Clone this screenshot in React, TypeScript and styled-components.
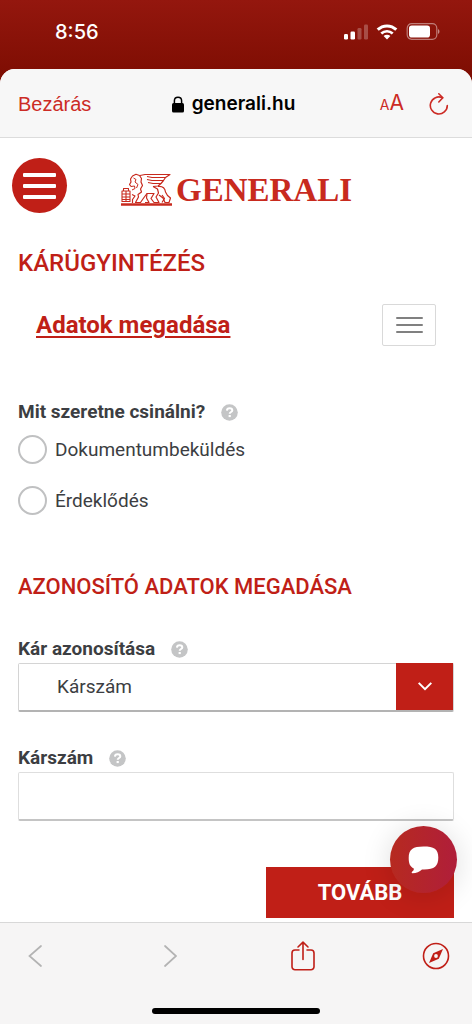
import React, { useState } from "react";
import styled, { createGlobalStyle } from "styled-components";

const red = "#c01f17";
const ink = "#3c3e42";

const GlobalStyle = createGlobalStyle`
  *, *::before, *::after { box-sizing: border-box; }
  body { margin: 0; background: #7d0d02; font-family: Roboto, sans-serif; color: ${ink}; }
  button, input, select { font: inherit; color: inherit; }
  button { padding: 0; border: 0; background: none; cursor: pointer; }
  svg { display: block; }
`;

const Screen = styled.div`
  min-height: 100vh;
  display: flex;
  flex-direction: column;
  background: linear-gradient(#94170e, #7d0d02 80px);
`;

const StatusBar = styled.div`
  display: flex;
  align-items: center;
  justify-content: space-between;
  height: 69px;
  padding: 0 32px 6px 55px;
  color: #fff;
`;

const Clock = styled.time`
  font: 500 20px/24px Inter, sans-serif;
`;

const StatusIcons = styled.div`
  display: flex;
  align-items: center;
  gap: 8px;
`;

const Sheet = styled.div`
  flex: 1;
  display: flex;
  flex-direction: column;
  overflow: hidden;
  border-radius: 15px 15px 0 0;
  background: #fff;
`;

const BrowserBar = styled.header`
  display: grid;
  grid-template-columns: 1fr auto 1fr;
  align-items: center;
  height: 69px;
  padding: 2px 23px 0 18px;
  border-bottom: 1px solid #dcdcdc;
  background: #f7f7f7;
  font-family: Inter, sans-serif;
`;

const CloseButton = styled.button`
  justify-self: start;
  color: #cc2b25;
  font: 400 20px/24px "Liberation Sans", Arial, sans-serif;
`;

const Address = styled.div`
  display: flex;
  align-items: center;
  gap: 8px;
  color: #000;
  font: 600 19px/24px Inter, sans-serif;
`;

const BrowserActions = styled.div`
  display: flex;
  align-items: center;
  justify-self: end;
  gap: 25px;
  color: #cc2b25;
`;

const TextSizeButton = styled.button`
  color: inherit;
  font: 400 21px/24px Inter, sans-serif;
`;

const SmallLetter = styled.span`
  font-size: 14px;
`;

const IconButton = styled.button`
  color: inherit;
`;

const Page = styled.main`
  position: relative;
  flex: 1;
  padding-bottom: 3px;
`;

const SiteHeader = styled.div`
  display: grid;
  grid-template-columns: 1fr auto 1fr;
  align-items: center;
  padding: 20px 12px 0;
`;

const RoundMenu = styled.button`
  display: grid;
  place-items: center;
  width: 55px;
  height: 55px;
  border-radius: 50%;
  background: ${red};
`;

const Logo = styled.a`
  display: flex;
  align-items: center;
  gap: 4px;
  padding-top: 8px;
  color: #c82a1e;
  text-decoration: none;
  font: 700 33px/34px "Liberation Serif", "Times New Roman", serif;
`;

const Form = styled.form`
  padding: 0 18px;
`;

const Title = styled.h1`
  margin: 34px 0 0;
  color: ${red};
  font-size: 24px;
  font-weight: 500;
  line-height: 32px;
`;

const StepRow = styled.nav`
  display: flex;
  align-items: center;
  justify-content: space-between;
  margin: 25px 0 0;
  padding: 0 18px;
`;

const StepLink = styled.a`
  color: ${red};
  font-size: 24px;
  font-weight: 700;
  line-height: 32px;
  text-underline-offset: 3px;
  text-decoration-thickness: 2px;
`;

const SquareMenu = styled.button`
  display: grid;
  place-items: center;
  width: 54px;
  height: 42px;
  border: 1px solid #d9d9d9;
  border-radius: 2px;
`;

const Choices = styled.fieldset`
  margin: 54px 0 0;
  padding: 0;
  border: 0;
`;

const Caption = styled.div`
  display: flex;
  align-items: center;
  gap: 16px;
  height: 24px;
  font-size: 19px;
  font-weight: 700;
  line-height: 24px;
`;

const ChoiceList = styled.div`
  padding-top: 11px;
`;

const Choice = styled.label`
  display: flex;
  align-items: center;
  gap: 8px;
  margin-bottom: 22px;
  font-size: 19px;
  line-height: 29px;
`;

const Radio = styled.input`
  appearance: none;
  width: 29px;
  height: 29px;
  margin: 0;
  border: 2px solid #c0c1c2;
  border-radius: 50%;
  &:checked { background: radial-gradient(${red} 7px, #fff 8px); }
`;

const SectionTitle = styled.h2`
  margin: 34px 0 0;
  color: ${red};
  font-size: 22px;
  font-weight: 500;
  line-height: 32px;
`;

const Field = styled.div`
  margin-top: 34px;
`;

const SelectBox = styled.div`
  display: flex;
  height: 49px;
  margin-top: 2px;
  border: 1px solid #d4d4d4;
  border-bottom: 2px solid #b3b3b3;
  border-radius: 2px;
`;

const Select = styled.select`
  flex: 1;
  min-width: 0;
  padding: 0 0 1px 38px;
  border: 0;
  appearance: none;
  background: #fff;
  font-size: 19px;
`;

const SelectArrow = styled.span`
  display: grid;
  place-items: center;
  width: 57px;
  margin-top: -1px;
  background: ${red};
  pointer-events: none;
`;

const TextInput = styled.input`
  display: block;
  width: 100%;
  height: 49px;
  margin-top: 2px;
  padding: 0 16px;
  border: 1px solid #dedede;
  border-bottom: 2px solid #c4c4c4;
  border-radius: 2px;
  font-size: 19px;
`;

const Actions = styled.div`
  display: flex;
  justify-content: flex-end;
  margin-top: 46px;
`;

const NextButton = styled.button`
  width: 188px;
  height: 51px;
  background: ${red};
  color: #fff;
  font-size: 22px;
  font-weight: 700;
`;

const ChatButton = styled.button`
  position: absolute;
  right: 15px;
  bottom: 29px;
  display: grid;
  place-items: center;
  width: 67px;
  height: 67px;
  border-radius: 50%;
  background: linear-gradient(90deg, #b62a20, #b01e3a);
  box-shadow: 0 3px 30px rgba(0, 0, 0, 0.14);
`;

const Toolbar = styled.footer`
  display: flex;
  flex-direction: column;
  justify-content: space-between;
  align-items: center;
  height: 102px;
  padding: 17px 22px 10px;
  border-top: 1px solid #d8d8d8;
  background: #f6f5f5;
`;

const ToolbarRow = styled.div`
  display: flex;
  align-items: center;
  justify-content: space-between;
  width: 100%;
  height: 32px;
  color: ${red};
`;

const ToolbarButton = styled.button`
  display: grid;
  place-items: center;
  width: 28px;
  height: 32px;
  color: inherit;
`;

const HomeIndicator = styled.div`
  width: 168px;
  height: 6px;
  border-radius: 3px;
  background: #000;
`;

const Help = () => (
  <svg width="17" height="17" viewBox="0 0 17 17" role="img" aria-label="Súgó">
    <circle cx="8.500" cy="8.500" r="8.300" fill="#c4c5c6" />
    <path d="M5.900 6.600C6 4.900 7 4.200 8.600 4.200C10.200 4.200 11.300 5 11.300 6.400C11.300 8 8.700 8 8.700 9.800" fill="none" stroke="#fff" strokeWidth="2" />
    <rect x="7.600" y="11" width="2.200" height="2.100" fill="#fff" />
  </svg>
);

const Lion = () => (
  <svg width="52" height="34" viewBox="0 0 52 34" fill="none" stroke="currentColor" strokeWidth="1.200" strokeLinejoin="round" aria-hidden="true">
    <path d="M1 31.500H52" strokeWidth="2.600" />
    <path d="M2 18H10V28.500H2ZM2 21H10M2 24H10M2 26.500H10M6 18V28.500M3.500 18V15.500H8.500V18" strokeWidth="1.100" />
    <path d="M11 13.500L9.500 11.500L11 9L10.500 6L12.500 3L16 1.300L19.500 2.500L21.500 5.500L21 9L22.500 12.500L20.500 16L21.500 19L18 21.500L18.500 24L15.500 29.500H20.500L24 24.500L27 20.500" />
    <path d="M11 13.500L14.500 13L15 15.500L12 17M13.500 5L16 6.500L15 9L18 11.500L16.500 15" strokeWidth="1" />
    <path d="M20 2.500L25 1.500H50L45.500 4.500H32L27 3.500M45.500 4.500L43.500 7.500H32L27 6.500M43.500 7.500L41 10.500H33L28 9.500M41 10.500L38 13L33 13.500" />
    <path d="M33 13.500L37.500 16L38.500 20L36 24L39 29.500H34L31 25.500L34 20.500H27L26.500 25L29 29.500H25M38 13.500C42.500 13 45 15.500 45.500 19L47.500 22.500L50.500 25L49 29.500H45L43 25L39 22" />
    <path d="M12 21.500L15 23L12.500 26.500V30M42 22L44.500 25.500L42 29.500" />
  </svg>
);

type LinesProps = { width: number; height: number; gap: number; thickness: number; color: string };

const Lines = ({ width, height, gap, thickness, color }: LinesProps) => (
  <svg width={width} height={height} viewBox={`0 0 ${width} ${height}`} fill={color} aria-hidden="true">
    {[0, 1, 2].map((i) => (
      <rect key={i} y={i * gap} width={width} height={thickness} rx="1" />
    ))}
  </svg>
);

export default function App() {
  const [kind, setKind] = useState("");
  const [claimNumber, setClaimNumber] = useState("");

  return (
    <Screen>
      <GlobalStyle />
      <StatusBar>
        <Clock>8:56</Clock>
        <StatusIcons>
          <svg width="24" height="16" viewBox="0 0 24 16" fill="#fff" aria-hidden="true">
            <rect y="10" width="4" height="5.500" rx="1.200" />
            <rect x="6.500" y="7.500" width="4.500" height="8" rx="1.200" />
            <rect x="13.500" y="4" width="4" height="11.500" rx="1.200" opacity="0.250" />
            <rect x="20" y="0.500" width="4" height="15" rx="1.200" opacity="0.250" />
          </svg>
          <svg width="22" height="16" viewBox="0 0 22 16" fill="none" stroke="#fff" strokeWidth="3" aria-hidden="true">
            <path d="M1.700 5.700C7 0.600 15 0.600 20.300 5.700" />
            <path d="M5.300 9.500C8.500 6.500 13.500 6.500 16.700 9.500" strokeWidth="2.700" />
            <path d="M11 15.500L7.600 12.100C9.500 10.400 12.500 10.400 14.400 12.100Z" fill="#fff" stroke="none" />
          </svg>
          <svg width="34" height="17" viewBox="0 0 34 17" fill="none" aria-hidden="true">
            <rect x="1.200" y="0.700" width="29.600" height="15.600" rx="4.500" stroke="#fff" strokeOpacity="0.450" strokeWidth="1.200" />
            <rect x="3" y="2.500" width="21" height="12" rx="2.800" fill="#fff" />
            <path d="M32 6V11C34 10 34 7 32 6Z" fill="#fff" fillOpacity="0.500" />
          </svg>
        </StatusIcons>
      </StatusBar>

      <Sheet>
        <BrowserBar>
          <CloseButton type="button">Bezárás</CloseButton>
          <Address>
            <svg width="12" height="17" viewBox="0 0 12 17" aria-hidden="true">
              <rect y="7" width="12" height="9.500" rx="1.600" />
              <path d="M2.400 8V4.700C2.400 0 9.600 0 9.600 4.700V8" fill="none" stroke="#000" strokeWidth="1.500" />
            </svg>
            generali.hu
          </Address>
          <BrowserActions>
            <TextSizeButton type="button" aria-label="Szövegméret">
              <SmallLetter>A</SmallLetter>A
            </TextSizeButton>
            <IconButton type="button" aria-label="Frissítés">
              <svg width="20" height="24" viewBox="0 0 20 24" fill="none" stroke="currentColor" strokeWidth="1.600" strokeLinecap="round" strokeLinejoin="round">
                <path d="M18.300 13.500A8.500 8.500 0 1 1 13.500 5.800" />
                <path d="M9.800 1.800L13.800 5.800L9.800 10" />
              </svg>
            </IconButton>
          </BrowserActions>
        </BrowserBar>

        <Page>
          <SiteHeader>
            <RoundMenu type="button" aria-label="Menü">
              <Lines width={33} height={26} gap={11} thickness={4} color="#fff" />
            </RoundMenu>
            <Logo href="#">
              <Lion />
              GENERALI
            </Logo>
          </SiteHeader>

          <Form onSubmit={(e) => e.preventDefault()}>
            <Title>KÁRÜGYINTÉZÉS</Title>
            <StepRow>
              <StepLink href="#">Adatok megadása</StepLink>
              <SquareMenu type="button" aria-label="Lépések">
                <Lines width={27} height={17} gap={7} thickness={2} color="#808080" />
              </SquareMenu>
            </StepRow>

            <Choices aria-labelledby="task">
              <Caption>
                <span id="task">Mit szeretne csinálni?</span>
                <Help />
              </Caption>
              <ChoiceList>
                {["Dokumentumbeküldés", "Érdeklődés"].map((name) => (
                  <Choice key={name}>
                    <Radio type="radio" name="task" value={name} checked={kind === name} onChange={() => setKind(name)} />
                    {name}
                  </Choice>
                ))}
              </ChoiceList>
            </Choices>

            <SectionTitle>AZONOSÍTÓ ADATOK MEGADÁSA</SectionTitle>

            <Field>
              <Caption>
                <label htmlFor="identify">Kár azonosítása</label>
                <Help />
              </Caption>
              <SelectBox>
                <Select id="identify" defaultValue="number">
                  <option value="number">Kárszám</option>
                </Select>
                <SelectArrow>
                  <svg width="14" height="9" viewBox="0 0 14 9" fill="none" stroke="#fff" strokeWidth="2" aria-hidden="true">
                    <path d="M0.700 0.900L7 7.200L13.300 0.900" />
                  </svg>
                </SelectArrow>
              </SelectBox>
            </Field>

            <Field>
              <Caption>
                <label htmlFor="number">Kárszám</label>
                <Help />
              </Caption>
              <TextInput id="number" type="text" value={claimNumber} onChange={(e) => setClaimNumber(e.target.value)} />
            </Field>

            <Actions>
              <NextButton type="submit">TOVÁBB</NextButton>
            </Actions>
          </Form>

          <ChatButton type="button" aria-label="Csevegés">
            <svg width="31" height="28" viewBox="0 0 31 28" fill="#fff">
              <path d="M15.500 0.500C26 0.500 30.300 3 30.300 11.500C30.300 20.500 26 24 14 23.500C11.500 25.800 8.500 27 4.500 27.300C3.300 27.200 3.500 26.300 4.500 25.300C5.600 24.300 6 23.500 5.800 22.400C2 20.800 0.700 17.500 0.700 12C0.700 3 5 0.500 15.500 0.500Z" />
            </svg>
          </ChatButton>
        </Page>

        <Toolbar>
          <ToolbarRow>
            <ToolbarButton type="button" aria-label="Vissza">
              <svg width="16" height="24" viewBox="0 0 16 24" fill="none" stroke="#b3b3b3" strokeWidth="1.700" strokeLinecap="round">
                <path d="M13 2L1.500 12L13 22" />
              </svg>
            </ToolbarButton>
            <ToolbarButton type="button" aria-label="Előre">
              <svg width="16" height="24" viewBox="0 0 16 24" fill="none" stroke="#b3b3b3" strokeWidth="1.700" strokeLinecap="round">
                <path d="M4 2L15 12L4 22" />
              </svg>
            </ToolbarButton>
            <ToolbarButton type="button" aria-label="Megosztás">
              <svg width="24" height="30" viewBox="0 0 24 30" fill="none" stroke="currentColor" strokeWidth="1.600" strokeLinecap="round" strokeLinejoin="round">
                <path d="M8 9H4A3 3 0 0 0 1 12V25.800A3 3 0 0 0 4 28.800H20A3 3 0 0 0 23 25.800V12A3 3 0 0 0 20 9H16" />
                <path d="M12 18.500V1.200M7 6L12 1.200L17 6" />
              </svg>
            </ToolbarButton>
            <ToolbarButton type="button" aria-label="Megnyitás böngészőben">
              <svg width="28" height="28" viewBox="0 0 28 28" fill="none" stroke="currentColor" strokeWidth="1.600">
                <circle cx="14" cy="14" r="12.500" />
                <path d="M21 7L16.800 16.800L7 21L11.200 11.200Z" fill="currentColor" stroke="none" />
                <circle cx="14" cy="14" r="1.900" fill="#f6f5f5" stroke="none" />
              </svg>
            </ToolbarButton>
          </ToolbarRow>
          <HomeIndicator />
        </Toolbar>
      </Sheet>
    </Screen>
  );
}
